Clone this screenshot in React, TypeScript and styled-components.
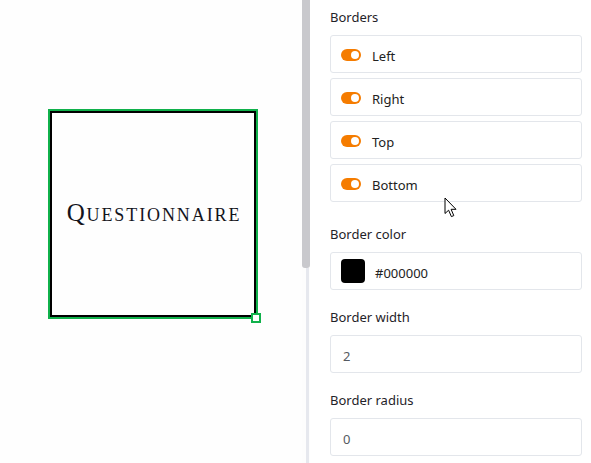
import styled, { createGlobalStyle } from 'styled-components';

const GlobalStyle = createGlobalStyle`
  html, body {
    margin: 0;
    padding: 0;
    background: #fdfdfd;
  }
  * {
    box-sizing: border-box;
  }
`;

const Page = styled.div`
  position: relative;
  display: flex;
  width: 591px;
  height: 463px;
  overflow: hidden;
  font-family: 'Noto Sans', 'Open Sans', sans-serif;
`;

const CanvasPane = styled.div`
  width: 302px;
  flex-shrink: 0;
  padding: 109px 0 0 48px;
  background: #fefefe;
`;

const SelectionFrame = styled.div`
  position: relative;
  width: 210px;
  height: 210px;
  border: 2px solid #10b14b;
`;

const Element = styled.div`
  width: 100%;
  height: 100%;
  border: 2px solid #000;
  background: #fefefe;
  display: flex;
  align-items: center;
  justify-content: center;
  padding-bottom: 2px;
`;

const Title = styled.span`
  font-family: 'Liberation Serif', 'DejaVu Serif', serif;
  font-size: 25px;
  font-variant: small-caps;
  letter-spacing: 1.9px;
  color: #14141c;
  margin-right: -2px;
`;

const ResizeHandle = styled.div`
  position: absolute;
  right: -5px;
  bottom: -6px;
  width: 10px;
  height: 10px;
  border: 2px solid #10b14b;
  background: #fff;
`;

const Gutter = styled.div`
  width: 8px;
  flex-shrink: 0;
  display: flex;
  flex-direction: column;
  background: #fdfdfd;
`;

const Thumb = styled.div`
  height: 268px;
  background: #c9c9cd;
  border-radius: 0 0 3px 3px;
`;

const Track = styled.div`
  flex: 1;
  margin-left: 4px;
  width: 3px;
  background: #e6e8ee;
`;

const Panel = styled.div`
  flex: 1;
  padding: 8px 9px 0 20px;
  background: #fff;
  display: flex;
  flex-direction: column;
  gap: 18px;
`;

const Field = styled.div`
  display: flex;
  flex-direction: column;
`;

const Label = styled.div`
  font-size: 13px;
  line-height: 18px;
  color: #1f2329;
  margin-bottom: 9px;
`;

const ToggleList = styled.div`
  display: flex;
  flex-direction: column;
  gap: 5px;
  margin-bottom: 5px;
`;

const Box = styled.div`
  height: 38px;
  border: 1px solid #e3e6eb;
  border-radius: 3px;
  background: #fff;
  display: flex;
  align-items: center;
  padding: 3px 0 0 10px;
  font-size: 13px;
  color: #222;
`;

const Switch = styled.span<{ $on: boolean }>`
  position: relative;
  width: 20px;
  height: 12px;
  border-radius: 6px;
  background: ${p => (p.$on ? '#f57c00' : '#c9cdd4')};
  margin: -1px 11px 0 0;

  &::after {
    content: '';
    position: absolute;
    top: 2px;
    ${p => (p.$on ? 'right: 2px;' : 'left: 2px;')}
    width: 8px;
    height: 8px;
    border-radius: 50%;
    background: #fff;
  }
`;

const Swatch = styled.span<{ $color: string }>`
  width: 24px;
  height: 24px;
  border-radius: 4px;
  background: ${p => p.$color};
  margin: -3px 10px 0 0;
`;

const Value = styled.span`
  padding-left: 2px;
  color: #555a61;
`;

const Cursor = styled.svg`
  position: absolute;
  left: 444px;
  top: 197px;
`;

const sides = ['Left', 'Right', 'Top', 'Bottom'];

const App = () => {
  return (
    <>
      <GlobalStyle />
      <Page>
        <CanvasPane>
          <SelectionFrame>
            <Element>
              <Title>Questionnaire</Title>
            </Element>
            <ResizeHandle />
          </SelectionFrame>
        </CanvasPane>
        <Gutter>
          <Thumb />
          <Track />
        </Gutter>
        <Panel>
          <Field>
            <Label>Borders</Label>
            <ToggleList>
              {sides.map(side => (
                <Box key={side}>
                  <Switch $on />
                  {side}
                </Box>
              ))}
            </ToggleList>
          </Field>
          <Field>
            <Label>Border color</Label>
            <Box>
              <Swatch $color="#000" />
              #000000
            </Box>
          </Field>
          <Field>
            <Label>Border width</Label>
            <Box>
              <Value>2</Value>
            </Box>
          </Field>
          <Field>
            <Label>Border radius</Label>
            <Box>
              <Value>0</Value>
            </Box>
          </Field>
        </Panel>
        <Cursor width="14" height="22" viewBox="0 0 14 22">
          <path
            d="M1 1 L1 16.5 L4.6 13.2 L7.4 19.6 L9.8 18.6 L7.1 12.3 L12 12.3 Z"
            fill="#fff"
            stroke="#000"
            strokeWidth="1"
            strokeLinejoin="round"
          />
        </Cursor>
      </Page>
    </>
  );
};

export default App;
